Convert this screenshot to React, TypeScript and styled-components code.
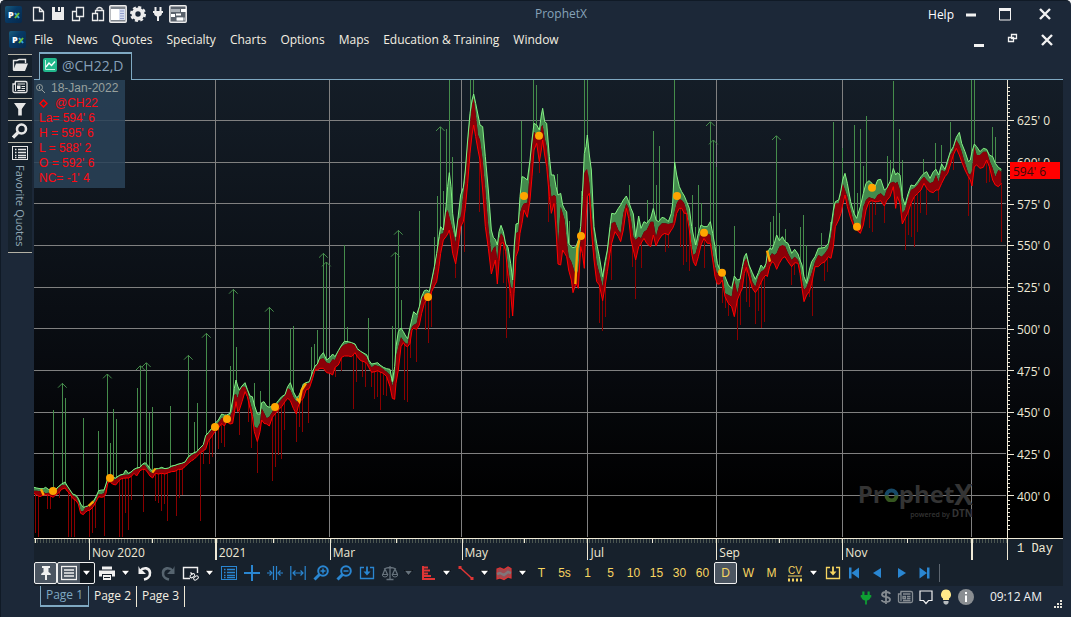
import React from "react";
import styled, { createGlobalStyle, css } from "styled-components";

const color = {
  frame: "#1c2838",
  panel: "#17212c",
  cream: "#efe9d6",
  steel: "#7fa9c2",
  blue: "#2a86d1",
  yellow: "#f7d560",
  red: "#e03535",
  grid: "#808080",
};

const GlobalStyle = createGlobalStyle`
  * { box-sizing: border-box; }
  html, body { margin: 0; padding: 0; background: #f4f6f8; }
  body { font-family: "Open Sans", "Noto Sans", sans-serif; font-size: 12px; color: #f2f2f2; }
  button { font: inherit; color: inherit; background: none; border: 0; padding: 0; margin: 0; }
  svg { display: block; flex: none; }
`;

const Window = styled.div`
  display: flex;
  flex-direction: column;
  min-height: 100vh;
  background: ${color.frame};
  border-radius: 5px 5px 0 0;
  border-left: 1px solid #101a26;
  border-top: 1px solid #101a26;
  overflow: hidden;
`;

const TitleBar = styled.header`
  display: grid;
  grid-template-columns: 1fr auto 1fr;
  align-items: center;
  height: 26px;
  padding: 0 18px 0 4px;
`;

const AppTitle = styled.h1`
  margin: 0;
  padding-left: 64px;
  font-size: 12px;
  font-weight: 400;
  line-height: 16px;
  color: #86a3b8;
`;

const QuickTools = styled.div`
  display: flex;
  align-items: center;
  height: 22px;
`;

const QuickGroup = styled.div`
  display: flex;
  margin-left: 6px;
`;

const QuickButton = styled.button`
  width: 20px;
  height: 20px;
  display: grid;
  place-items: center;
  color: #ececec;
`;

const Controls = styled.div`
  display: flex;
  align-items: center;
  justify-content: flex-end;
`;

const HelpLink = styled.a`
  color: #fff;
  text-decoration: none;
  margin-right: 9px;
`;

const ControlButton = styled.button<{ $gap?: number }>`
  width: 16px;
  height: 16px;
  display: grid;
  place-items: center;
  margin-left: ${(p) => p.$gap ?? 0}px;
`;

const MenuBar = styled.nav`
  display: flex;
  align-items: center;
  height: 25px;
  padding: 0 16px 0 8px;
`;

const MenuList = styled.div`
  display: flex;
  flex: 1;
  gap: 14px;
  padding-left: 8px;
`;

const MenuItem = styled.button`
  color: #f4efe2;
  line-height: 18px;
  white-space: nowrap;
`;

const Body = styled.div`
  display: flex;
  flex: 1;
  padding: 0 8px 0 7px;
`;

const SideBar = styled.aside`
  width: 24px;
  margin-right: 2px;
  padding-top: 2px;
`;

const SideButton = styled.button<{ $tall?: boolean }>`
  display: flex;
  flex-direction: column;
  align-items: center;
  gap: 4px;
  width: 24px;
  height: ${(p) => (p.$tall ? 111 : 22)}px;
  padding-top: 2px;
  border-top: 1px solid #b3b1a5;
  background: #15202b;
  color: #e6e6e6;
  ${(p) =>
    p.$tall &&
    css`
      border-bottom: 1px solid #b3b1a5;
    `}
`;

const VerticalText = styled.span`
  writing-mode: vertical-rl;
  font-size: 11px;
  line-height: 16px;
  color: #93a9b8;
  white-space: nowrap;
`;

const Main = styled.main`
  display: flex;
  flex-direction: column;
  flex: 1;
  min-width: 0;
`;

const TabRow = styled.div`
  display: flex;
  height: 28px;
  padding-left: 5px;
  border-bottom: 1px solid ${color.steel};
`;

const ChartTab = styled.button`
  display: flex;
  align-items: center;
  gap: 5px;
  height: 28px;
  width: 93px;
  padding: 0 0 4px 3px;
  border: 1px solid ${color.steel};
  border-top-width: 2px;
  border-bottom: 0;
  background: #16212c;
  color: #86a0b8;
  font-size: 14px;
  white-space: nowrap;
`;

const ChartRow = styled.div`
  display: flex;
  flex: 1;
`;

const Plot = styled.section`
  position: relative;
  flex: 1;
  display: flex;
  min-height: 300px;
  background: linear-gradient(#141d27, #080b10 60%, #000 92%);
`;

const PlotSvg = styled.svg`
  flex: 1;
  width: 100%;
  height: 100%;
  min-width: 0;
`;

const PriceAxis = styled.div`
  position: relative;
  display: flex;
  width: 56px;
  background: linear-gradient(#141d27, #080b10 60%, #000 92%);
`;

const PriceLabels = styled.div`
  display: flex;
  flex-direction: column;
  flex: 1;
  padding: 20px 0 21px 2px;
`;

const PriceLabel = styled.div`
  flex: 1;
  display: flex;
  align-items: center;
  color: ${color.cream};
  white-space: nowrap;
`;

const LastPrice = styled.div`
  position: absolute;
  top: 18%;
  left: 3px;
  width: 50px;
  height: 17px;
  padding-left: 3px;
  line-height: 19px;
  background: #ff0000;
  color: #3a0c0c;
`;

const Legend = styled.div`
  position: absolute;
  left: 0;
  top: 0;
  width: 91px;
  height: 108px;
  padding: 1px 0 0 5px;
  background: rgba(42, 66, 88, 0.86);
  font-family: "Liberation Sans", Arial, sans-serif;
  font-size: 12px;
  line-height: 15px;
  color: #ff0a12;
  white-space: nowrap;
`;

const LegendDate = styled.div`
  display: flex;
  align-items: center;
  gap: 5px;
  margin-left: -4px;
  color: #98a09d;
`;

const LegendSymbol = styled.div`
  display: flex;
  align-items: center;
  gap: 7px;
`;

const Brand = styled.div`
  position: absolute;
  right: 34px;
  bottom: 18px;
  display: flex;
  flex-direction: column;
  align-items: flex-end;
  color: #343434;
  font-weight: 700;
`;

const BrandName = styled.div`
  display: flex;
  align-items: center;
  font-size: 24px;
  line-height: 28px;
`;

const BrandX = styled.span`
  font-size: 28px;
`;

const BrandNote = styled.div`
  font-size: 7px;
  line-height: 10px;
  font-weight: 600;
`;

const BrandMark = styled.b`
  font-size: 10px;
  font-weight: 700;
`;

const TimeAxis = styled.div`
  display: flex;
  height: 22px;
  border-top: 1px solid ${color.cream};
  background: ${color.panel};
`;

const Months = styled.div`
  flex: 1;
  display: grid;
  grid-template-columns: 55fr 126fr 115fr 132fr 126fr 129fr 126fr 129fr 36fr;
  background: repeating-linear-gradient(90deg, #4a5550 0 1px, transparent 1px 3px) 0 0 / 100% 4px no-repeat;
`;

const Month = styled.div<{ $first?: boolean; $year?: boolean; $last?: boolean }>`
  min-width: 0;
  padding-left: 2px;
  line-height: 28px;
  height: 21px;
  white-space: nowrap;
  color: ${color.cream};
  border-left: ${(p) => (p.$first ? 0 : p.$year ? 2 : 1)}px solid ${color.cream};
  ${(p) =>
    !p.$last &&
    css`
      background: linear-gradient(${color.cream}, ${color.cream}) ${p.$first ? "1px" : "50%"} 0 / 1px 4px no-repeat;
    `}
`;

const Period = styled.div`
  width: 56px;
  border-left: 1px solid ${color.cream};
  padding-left: 9px;
  font-family: "Liberation Mono", "Courier New", monospace;
  font-size: 12px;
  line-height: 21px;
  color: ${color.cream};
`;

const ToolBar = styled.div`
  display: flex;
  align-items: center;
  height: 26px;
  background: ${color.panel};
`;

type ToolProps = { $tone?: string; $caret?: boolean; $active?: boolean; $wide?: boolean };
const Tool = styled.button<ToolProps>`
  flex: none;
  display: flex;
  align-items: center;
  justify-content: center;
  gap: 5px;
  width: ${(p) => (p.$wide ? 38 : p.$caret ? 15 : 23)}px;
  height: 22px;
  color: ${(p) => p.$tone ?? "#f0f0f0"};
  font-family: "Liberation Sans", Arial, sans-serif;
  font-size: 12px;
  ${(p) =>
    p.$active &&
    css`
      border: 1px solid #f0f0f0;
      border-radius: 2px;
      background: ${p.$wide ? "linear-gradient(90deg, #4b5561 60%, #101820 60%)" : "#4b5561"};
    `}
`;

const ToolDivider = styled.span`
  width: 1px;
  height: 18px;
  margin-left: 3px;
  background: #5d6670;
`;

const StatusBar = styled.footer`
  display: flex;
  height: 31px;
  padding-left: 6px;
  justify-content: space-between;
`;

const Pages = styled.div`
  display: flex;
  height: 21px;
`;

const PageTab = styled.button<{ $current?: boolean }>`
  width: ${(p) => (p.$current ? 49 : 48)}px;
  height: 21px;
  line-height: 18px;
  padding-bottom: 2px;
  white-space: nowrap;
  color: ${(p) => (p.$current ? color.steel : "#f4efe2")};
  border-right: 1px solid ${color.cream};
  ${(p) =>
    p.$current &&
    css`
      border: 1px solid ${color.steel};
      border-top: 0;
      border-bottom-width: 2px;
    `}
`;

const StatusIcons = styled.div`
  display: flex;
  align-items: center;
  height: 22px;
`;

const StatusButton = styled.button`
  width: 20px;
  display: grid;
  place-items: center;
`;

const Clock = styled.time`
  margin: 0 12px 0 14px;
  line-height: 16px;
  white-space: nowrap;
`;

const Grip = styled.svg`
  align-self: flex-end;
  margin-right: 1px;
`;

/* ---------- icons ---------- */

const PxLogo = () => (
  <svg width="17" height="17" viewBox="0 0 17 17">
    <defs>
      <linearGradient id="px" x1="0" y1="0" x2="1" y2="1">
        <stop offset="0" stopColor="#1a5f80" />
        <stop offset="0.4" stopColor="#073a66" />
        <stop offset="1" stopColor="#06284c" />
      </linearGradient>
    </defs>
    <rect width="17" height="17" rx="2" fill="url(#px)" />
    <text x="3" y="12" fontFamily="Open Sans" fontWeight="800" fontSize="9" fill="#fff">P</text>
    <path d="M10 7 L14 12" stroke="#35a8e0" strokeWidth="2" />
    <path d="M14 7 L10 12" stroke="#6cbf3a" strokeWidth="2" />
  </svg>
);

type Draw = { children: React.ReactNode; w?: number; h?: number };
const Icon = ({ children, w = 16, h = 16 }: Draw) => (
  <svg width={w} height={h} viewBox={`0 0 ${w} ${h}`} fill="none" stroke="currentColor" strokeWidth="1">
    {children}
  </svg>
);

const Gear = () => (
  <Icon>
    <circle cx="8" cy="8" r="4.6" strokeWidth="3.8" />
    <circle cx="8" cy="8" r="6.8" strokeWidth="2.4" strokeDasharray="3 2.34" />
  </Icon>
);
const Plug = () => (
  <Icon>
    <path d="M5.5 1V5M10.5 1V5" strokeWidth="2" />
    <path d="M3 5h10v2h-1c0 2-1 3-3 3.5V15H7v-4.5C5 10 4 9 4 7H3z" fill="currentColor" stroke="none" />
  </Icon>
);
const Caret = ({ dim }: { dim?: boolean }) => (
  <svg width="9" height="6" viewBox="0 0 9 6">
    <path d="M0 0h9L4.5 5.5z" fill="#05080c" />
    <path d="M1 0.8h7L4.5 5z" fill={dim ? "#66727c" : "#fff"} />
  </svg>
);
const Lines = () => (
  <Icon>
    <rect x="0.5" y="1.5" width="15" height="13" />
    <path d="M3 4.5h1.5M6 4.500h8M3 7.500h1.5M6 7.500h8M3 10.500h1.5M6 10.500h8M3 12.700h1.5M6 12.700h8" strokeWidth="1.3" />
  </Icon>
);
const Lens = ({ plus }: { plus?: boolean }) => (
  <Icon>
    <circle cx="10" cy="6" r="4.8" strokeWidth="2" />
    <path d="M6.5 9.5L1.5 14.5" strokeWidth="3" />
    <path d={plus ? "M7.5 6h5M10 3.5v5" : "M7.5 6h5"} strokeWidth="1.5" />
  </Icon>
);
const Download = () => (
  <Icon>
    <path d="M5 2.5H1.5v11h13v-11H11" strokeWidth="1.3" />
    <path d="M8 1.5v6" strokeWidth="1.8" />
    <path d="M4.5 6.5h7L8 10.5z" fill="currentColor" stroke="none" />
  </Icon>
);
const NewsIcon = () => (
  <Icon>
    <path d="M3.5 2.5h10q1.5 0 1.5 1.5v8q0 1.5-1.5 1.5h-11Q1 13.5 1 12V5h2z" strokeWidth="1.3" />
    <path d="M3.5 3v9" />
    <path d="M5.5 5h7.5M9.5 7.5H13M9.5 9.5H13M5.5 11.5H13" strokeWidth="1.2" />
    <rect x="5.5" y="7" width="2.5" height="2.5" fill="currentColor" />
  </Icon>
);

/* ---------- chart data ---------- */

/* The chart grid uses three units per bar pixel; each block starts at its own origin. */
const place = (ox: number, oy: number, rows: number[][]) =>
  rows.map(([x, ...ys]) => [x + ox, ...ys.map((y) => y + oy)]);

const bands = [
  ...place(90, 840, [
    [12,622,632,640],[20,624,632,645],[30,626,634,650],[40,626,636,645],[47,622,640,645],[55,628,638,645],
    [62,630,640,648],[69,628,640,652],[77,628,636,645],[85,620,624,640],[95,612,616,628],[105,606,614,624],
    [112,618,622,634],[120,630,634,642],[128,642,646,655],[138,646,652,662],[145,655,665,672],[152,672,694,700],
    [160,682,694,704],[166,680,682,697],[173,678,680,692],[180,672,676,690],[190,664,672,680],[198,650,660,665],
    [206,632,642,650],[215,630,642,652],[222,630,640,650],[228,612,620,640],[233,596,602,610],[240,588,596,605],
    [247,592,600,612],[257,594,598,615],[265,588,592,605],[272,584,588,597],[280,583,586,595],[287,570,584,594],
    [295,580,584,594],[303,576,580,590],[312,568,570,580],[320,564,568,588],[330,562,564,572],[338,552,556,568],
    [345,548,556,568],[352,554,566,576],[360,566,576,588],[368,574,580,594],[376,566,570,580],[385,566,568,582],
    [395,562,568,580],[405,566,568,582],[415,564,566,578],[425,558,562,575],[435,556,558,574],[445,552,555,568],
    [455,550,552,568],[465,546,548,560],[475,530,534,550],[485,522,526,542],[492,518,522,538],[500,515,518,530],
    [510,504,506,520],[520,494,498,512],[527,466,470,508],[535,458,462,482],[545,445,450,470],[555,430,442,455],
    [565,420,428,445],[575,402,415,430],[583,405,412,438],[590,405,412,425],[600,400,410,432],[608,360,390,430],
    [613,325,345,400],[618,300,342,365],[623,318,355,395],[628,330,335,390],[636,318,320,365],[645,308,320,335],
    [652,328,335,350],[660,348,365,385],[667,350,390,410],[673,375,440,455],[682,402,445,485],[690,402,430,455],
    [695,368,385,420],[702,365,398,430],[710,378,415,432],[718,382,410,438],[727,378,395,412],[735,375,385,402],
    [745,362,370,390],[755,350,358,380],[765,344,346,365],[773,320,324,355],[781,308,330,362],[790,335,352,385],
    [799,352,365,402],[805,350,362,378],[812,335,345,362],[820,312,318,355],[828,308,312,330],[838,305,308,325],
    [848,275,282,295],[855,258,262,270],[862,252,255,270],[870,230,238,265],[880,218,235,265],[890,240,248,278],
    [900,232,250,280],[908,222,238,285],[915,230,240,262],[925,212,215,255],[935,195,200,232],
  ]),
  ...place(1020, 240, [
    [13,784,794,828],[25,785,790,828],[35,788,790,830],[45,792,796,818],[52,806,810,830],[62,814,816,842],
    [72,820,824,845],[80,824,832,850],[86,840,850,862],[95,852,862,877],[105,850,855,875],[113,848,858,872],
    [120,855,860,876],[130,862,868,880],[140,866,875,890],[150,868,885,920],[157,905,918,955],[164,860,895,958],
    [168,800,830,910],[175,755,800,870],[183,744,772,800],[190,755,782,788],[197,768,790,798],[203,776,792,800],
    [210,742,755,790],[216,715,740,750],[221,695,735,745],[230,704,730,748],[238,680,690,735],[245,650,655,700],
    [253,632,645,670],[260,630,640,660],[268,635,645,660],[275,600,610,635],[283,560,575,618],[290,520,530,605],
    [297,470,490,560],[302,440,462,520],[310,450,460,480],[318,380,400,470],[323,320,390,462],[328,278,410,450],
    [333,320,430,480],[338,400,450,520],[347,470,488,552],[355,405,420,500],[362,345,410,440],[370,322,345,425],
    [376,270,300,385],[383,180,200,310],[390,100,130,220],[396,60,75,165],[401,42,55,135],[407,70,100,170],
    [414,105,165,210],[420,135,180,240],[428,140,240,330],[436,230,330,440],[445,330,440,505],[454,450,520,582],
    [460,472,505,560],[466,478,498,540],[472,495,540,612],[477,455,480,545],[483,436,460,490],[490,455,470,488],
    [497,492,500,515],[504,502,560,590],[512,550,620,640],[518,600,625,708],[522,505,570,640],[528,432,460,530],
    [535,430,455,510],[540,350,400,460],[546,290,380,430],[552,292,370,390],[562,300,368,412],[570,240,270,360],
    [576,180,200,290],[582,130,155,210],[590,135,165,190],[598,150,180,245],[604,105,140,210],[608,85,135,180],
    [614,125,175,225],[620,130,200,260],[628,230,300,350],[634,285,350,400],[642,285,345,370],[648,320,350,450],
    [654,345,500,552],[662,340,380,555],[668,375,400,510],[674,388,420,520],[680,395,480,530],[686,490,530,570],
    [694,500,545,600],[699,503,560,638],[708,500,590,610],[715,480,570,625],[722,440,470,500],[727,350,380,520],
    [733,220,280,565],[738,200,270,420],[742,165,268,350],[748,225,310,340],[754,270,390,450],[762,440,480,540],
    [770,490,550,605],[778,530,580,615],[788,590,620,662],[795,545,570,620],[802,510,530,575],[810,440,465,520],
    [815,400,430,490],[825,402,425,455],[835,385,450,470],[842,375,460,485],[850,360,400,450],[859,348,370,385],
    [866,365,385,415],[873,385,420,480],[880,402,470,510],[887,470,480,540],[896,408,470,500],[903,445,475,490],
    [912,425,455,475],[920,430,450,490],[932,415,425,500],[940,385,425,465],[948,420,470,498],[956,425,440,480],
    [966,412,430,465],[975,415,430,460],[985,425,432,465],
  ]),
  ...place(1950, 240, [
    [64,400,430,450],[68,370,430,445],[74,246,395,430],[80,285,370,400],[88,320,358,385],[95,335,360,385],
    [103,348,370,400],[110,365,395,400],[118,385,440,450],[125,440,500,520],[130,465,525,545],[137,495,520,558],
    [145,460,490,530],[153,435,450,495],[162,440,450,475],[172,440,460,490],[181,425,465,490],[188,460,520,540],
    [195,500,560,590],[202,550,580,612],[209,568,580,612],[217,572,580,600],[225,590,640,650],[235,615,645,670],
    [245,625,650,680],[253,588,600,710],[262,600,640,660],[270,598,605,640],[277,560,570,625],[283,530,545,580],
    [289,520,535,562],[297,555,565,590],[307,578,605,625],[316,598,620,638],[325,578,590,625],[333,555,575,608],
    [341,565,570,592],[348,550,560,585],[352,520,530,590],[359,505,530,560],[366,508,520,545],[373,490,525,550],
    [380,465,520,568],[388,482,500,550],[397,470,495,535],[405,485,498,530],[414,490,520,545],[425,520,540,560],
    [434,508,530,548],[444,522,540,550],[450,540,560,580],[456,555,600,625],[462,590,630,665],[470,610,620,645],
    [478,570,600,635],[485,545,580,610],[495,530,545,560],[505,505,525,560],[515,504,530,550],[525,502,520,545],
    [535,490,505,530],[543,440,470,535],[550,390,420,500],[556,365,370,440],[566,360,370,420],[573,330,345,400],
    [578,300,310,375],[585,280,330,345],[592,310,350,380],[602,365,390,415],[612,400,430,440],[620,415,440,450],
    [631,380,445,460],[640,340,380,435],[648,310,360,390],[657,302,352,365],[666,310,355,362],[675,320,358,365],
    [683,300,345,365],[692,298,340,362],[703,330,350,378],[710,325,330,362],[720,305,310,350],[730,265,305,320],
    [737,285,310,385],[742,278,305,350],[750,285,330,370],[757,350,400,432],[765,375,390,415],[773,345,360,400],
    [783,315,330,370],[793,318,325,350],[803,305,315,340],[813,290,300,330],[822,280,290,310],[830,275,300,325],
    [840,295,310,335],[850,275,305,338],[858,268,285,330],[866,285,305,330],[875,252,270,310],[885,268,275,290],
    [893,240,255,280],[901,215,225,255],[910,200,210,225],[919,172,180,205],[928,157,195,225],[935,190,215,245],
    [945,215,250,270],[955,245,280,290],[961,240,285,300],[966,215,270,318],[973,192,200,260],[980,200,225,255],
    [990,215,225,265],[1000,205,215,262],[1010,208,215,240],[1018,225,240,260],[1028,230,265,300],[1036,250,290,315],
    [1045,262,270,320],[1054,268,275,310],
  ]),
];

const highs = [
  ...place(90, 840, [
    [70,390],[107,354],[160,414],[205,454],[241,488],[250,388],[259,416],[322,324],[358,398],[367,380],[421,377],
    [493,426],[502,370],[601,258],[619,200],[673,308],[691,332],[781,146],[790,138],[844,200],[853,192],[862,150],
    [943,-105],[952,142],
  ]),
  ...place(1020, 240, [
    [85,714],[157,738],[184,660],[238,393],[283,472],[292,348],[310,333],[319,147],[328,0],[337,230],[391,0],
    [401,0],[544,123],[580,0],[589,15],[652,282],[688,424],[724,333],[733,0],[742,0],[868,315],[922,360],[940,153],
    [949,315],[958,198],
  ]),
  ...place(1950, 240, [
    [19,315],[73,0],[127,345],[136,440],[145,315],[154,370],[199,260],[208,495],[253,438],[361,426],[370,407],
    [388,400],[406,447],[451,440],[460,405],[469,495],[514,460],[541,425],[550,126],[577,205],[613,135],[622,340],
    [631,147],[640,258],[649,108],[712,228],[721,240],[730,3],[748,147],[757,240],[820,237],[856,188],[874,195],
    [901,126],[964,0],[973,0],[1027,141],[1036,172],
  ]),
];

const arrows = [
  ...place(90, 840, [[97,310],[232,282],[331,257],[349,248],[475,226],[529,160],[610,28],[718,82],[880,-80],[889,-54]]),
  ...place(1020, 240, [[166,517],[175,451],[301,140]]),
  ...place(1950, 240, [[181,125],[190,180],[379,167]]),
];

const lows = [
  ...place(90, 840, [
    [16,758],[25,770],[52,688],[61,688],[88,655],[115,770],[124,770],[133,770],[178,770],[187,758],[196,744],
    [223,768],[268,770],[277,770],[286,700],[295,750],[304,660],[340,695],[376,662],[385,668],[394,692],[403,672],
    [412,722],[439,708],[448,655],[457,645],[511,722],[520,552],[538,552],[547,532],[565,508],[574,488],[583,502],
    [628,465],[655,425],[664,503],[682,580],[727,603],[736,562],[745,525],[754,537],[763,450],[799,485],[808,440],
    [817,455],[835,430],[916,292],[934,272],
  ]),
  ...place(1020, 240, [
    [4,870],[40,988],[49,905],[67,890],[76,922],[94,922],[103,958],[112,952],[121,990],[130,945],[139,948],
    [193,960],[202,965],[211,835],[229,845],[256,750],[265,790],[274,742],[346,593],[373,515],[418,395],[499,775],
    [508,715],[490,608],[598,280],[625,425],[778,730],[787,752],[796,712],[814,600],[877,560],[886,656],[904,563],
  ]),
  ...place(1950, 240, [
    [46,515],[55,505],[91,500],[100,555],[109,545],[118,572],[163,563],[217,668],[226,685],[235,708],[262,780],
    [271,735],[289,665],[298,680],[316,732],[325,692],[334,743],[343,725],[424,615],[433,585],[478,650],[487,708],
    [523,603],[532,575],[658,443],[667,455],[676,405],[703,430],[766,510],[775,465],[784,470],[793,502],[802,455],
    [811,400],[829,405],[865,362],[910,270],[955,407],[1009,308],[1018,305],[1054,486],
  ]),
];

const dots = [
  ...place(90, 840, [[69,633],[240,594],[555,441],[591,417],[735,381]]),
  ...place(1020, 240, [[264,651],[552,348],[597,167],[723,468]]),
  ...place(1950, 240, [[81,348],[162,458],[216,578],[621,440],[666,323]]),
];

const crossings = [
  place(90, 840, [[33,628],[41,645]]),
  place(90, 840, [[176,678],[190,664]]),
  place(90, 840, [[367,578],[376,566]]),
  place(90, 840, [[800,355],[808,365],[815,330],[828,310]]),
  place(1020, 240, [[706,612],[712,505],[718,480]]),
  place(1950, 240, [[351,512],[360,545]]),
];

const bandAt = (x: number, key: number) => {
  const i = bands.findIndex((b) => b[0] >= x);
  if (i <= 0) return bands[i === 0 ? 0 : bands.length - 1][key];
  const a = bands[i - 1];
  const b = bands[i];
  return a[key] + ((b[key] - a[key]) * (x - a[0])) / (b[0] - a[0]);
};

const line = (key: number) => bands.map((b) => `${b[0]},${b[key]}`).join(" ");
const area = (top: number, bottom: number) =>
  line(top) + " " + [...bands].reverse().map((b) => `${b[0]},${b[bottom]}`).join(" ");

const levels = [0, 1, 2, 3, 4, 5, 6, 7, 8, 9].map((i) => 361.5 + i * 125);
const monthLines = [646.5, 988.5, 1384.5, 1762.5, 2149.5, 2527.5, 2914.5];

const Chart = () => (
  <PlotSvg viewBox="102 240 2919 1374" preserveAspectRatio="none" role="img" aria-label="@CH22 daily chart">
    <g stroke={color.grid} strokeWidth="3" shapeRendering="crispEdges">
      {levels.map((y) => <path key={y} d={`M102 ${y}H3018`} />)}
      {monthLines.map((x) => <path key={x} d={`M${x} 240V1611`} />)}
    </g>
    <g stroke="#458c4b" strokeWidth="3" shapeRendering="crispEdges">
      {highs.map(([x, y]) => <path key={x} d={`M${x} ${y}V${bandAt(x, 1)}`} />)}
      {arrows.map(([x, y]) => <path key={x} d={`M${x} ${y}V${bandAt(x, 1)}`} />)}
    </g>
    <g stroke="#8a0000" strokeWidth="3" shapeRendering="crispEdges">
      {lows.map(([x, y]) => <path key={x} d={`M${x} ${bandAt(x, 3)}V${y}`} />)}
    </g>
    <g stroke="#458c4b" strokeWidth="3" fill="none">
      {arrows.map(([x, y]) => <path key={x} d={`M${x - 13} ${y + 13}L${x} ${y}L${x + 13} ${y + 13}`} />)}
    </g>
    <polygon points={area(1, 2)} fill="#438a4d" />
    <polygon points={area(2, 3)} fill="#8b0008" />
    <polyline points={line(1)} fill="none" stroke="#84f284" strokeWidth="3" />
    <polyline points={line(3)} fill="none" stroke="#ff0000" strokeWidth="3" />
    {crossings.map((c, i) => (
      <polyline key={i} points={c.map((p) => p.join(",")).join(" ")} fill="none" stroke="#ffa500" strokeWidth="7" />
    ))}
    {dots.map(([x, y]) => <circle key={x} cx={x} cy={y} r="12" fill="#ffa500" />)}
  </PlotSvg>
);

const AxisTicks = () => (
  <svg width="8" height="100%" viewBox="0 0 8 458" preserveAspectRatio="none" stroke={color.cream} shapeRendering="crispEdges">
    <path d="M0.5 0V458" />
    {Array.from({ length: 107 }, (_, i) => (
      <path key={i} d={`M0 ${7.5 + i * 4.1667}H${i % 10 === 8 ? 7 : 3}`} />
    ))}
  </svg>
);

const prices = ["625' 0", "600' 0", "575' 0", "550' 0", "525' 0", "500' 0", "475' 0", "450' 0", "425' 0", "400' 0"];
const menus = ["File", "News", "Quotes", "Specialty", "Charts", "Options", "Maps", "Education & Training", "Window"];
const months = ["", "Nov 2020", "2021", "Mar", "May", "Jul", "Sep", "Nov", ""];
const intervals = ["T", "5s", "1", "5", "10", "15", "30", "60", "D", "W", "M"];

const DropTool = ({ dim, label }: { dim?: boolean; label: string }) => (
  <Tool $caret aria-label={label}><Caret dim={dim} /></Tool>
);

export default function App() {
  return (
    <>
      <GlobalStyle />
      <Window>
        <TitleBar>
          <QuickTools>
            <PxLogo />
            <QuickGroup>
              <QuickButton aria-label="New">
                <Icon><path d="M3.5 1.5h6l4 4v9h-10zM9.5 1.5v4h4" strokeWidth="1.3" /></Icon>
              </QuickButton>
              <QuickButton aria-label="Save">
                <Icon>
                  <path d="M2 1h12v13H2z" fill="currentColor" stroke="none" />
                  <path d="M5 1h6v5H5z" fill={color.frame} stroke="none" />
                  <path d="M8 1h2v4H8z" fill="currentColor" stroke="none" />
                </Icon>
              </QuickButton>
              <QuickButton aria-label="Copy">
                <Icon><path d="M6.5 1.5h7v9h-7zM6 5.5H2.5v9h7V11" strokeWidth="1.3" /></Icon>
              </QuickButton>
              <QuickButton aria-label="Paste">
                <Icon><path d="M5.5 7V4.500h8v10h-5M7 4V2.500q2.500-2 5 0V4M2.500 7.500h5v7h-5z" strokeWidth="1.3" /></Icon>
              </QuickButton>
              <QuickButton aria-label="Layout">
                <Icon w={18} h={18}>
                  <rect x="0.8" y="0.8" width="16.4" height="16.4" rx="1" fill="#7c838b" strokeWidth="1.5" />
                  <rect x="2" y="4" width="8" height="11" fill="#fff" stroke="none" />
                  <rect x="10" y="4" width="6" height="11" fill="#d7def0" stroke="none" />
                  <path d="M11.5 6h3M11.5 8.5h3M11.5 11h3M11.5 13.5h3" stroke="#4c5fa8" strokeDasharray="1 1" />
                </Icon>
              </QuickButton>
              <QuickButton aria-label="Settings"><Gear /></QuickButton>
              <QuickButton aria-label="Connect"><Plug /></QuickButton>
              <QuickButton aria-label="Arrange">
                <Icon w={18} h={18}>
                  <rect x="0.8" y="0.8" width="16.4" height="16.4" rx="1" fill="#59616b" strokeWidth="1.5" />
                  <path d="M2 5.5h9M7 14h9" stroke="#a9afb5" strokeWidth="3" />
                  <path d="M12 5.5h5M2 10.5h4M8 14h6" stroke="#fff" strokeWidth="3" />
                  <path d="M7 9.500h5" stroke="#fff" strokeWidth="2" />
                </Icon>
              </QuickButton>
            </QuickGroup>
          </QuickTools>
          <AppTitle>ProphetX</AppTitle>
          <Controls>
            <HelpLink href="#help">Help</HelpLink>
            <ControlButton aria-label="Minimize"><Icon><path d="M3 9h10" strokeWidth="3" /></Icon></ControlButton>
            <ControlButton $gap={18} aria-label="Maximize">
              <Icon><path d="M2.5 3v11h11V3" /><path d="M2 3.500h12" strokeWidth="3" /></Icon>
            </ControlButton>
            <ControlButton $gap={24} aria-label="Close"><Icon><path d="M3 3L13 13M13 3L3 13" strokeWidth="2.4" /></Icon></ControlButton>
          </Controls>
        </TitleBar>

        <MenuBar>
          <PxLogo />
          <MenuList>
            {menus.map((m) => <MenuItem key={m}>{m}</MenuItem>)}
          </MenuList>
          <ControlButton aria-label="Minimize chart"><Icon><path d="M3 13.5h10" strokeWidth="3" /></Icon></ControlButton>
          <ControlButton $gap={18} aria-label="Restore chart">
            <Icon><path d="M6.5 2.5h5v4h-5zM3.5 5.500h5v4h-5z" strokeWidth="1.3" /></Icon>
          </ControlButton>
          <ControlButton $gap={18} aria-label="Close chart"><Icon><path d="M3 3L13 13M13 3L3 13" strokeWidth="2.4" /></Icon></ControlButton>
        </MenuBar>

        <Body>
          <SideBar>
            <SideButton aria-label="Open">
              <Icon>
                <path d="M1.5 13V3.500H5L7 2.500H13.500V6" strokeWidth="1.4" />
                <path d="M4 6.5H16L13 14H1z" fill="currentColor" stroke="none" />
              </Icon>
            </SideButton>
            <SideButton aria-label="News"><NewsIcon /></SideButton>
            <SideButton aria-label="Filter">
              <Icon><path d="M2 2h12L9.8 8v6.500H6.200V8z" fill="currentColor" stroke="none" /></Icon>
            </SideButton>
            <SideButton aria-label="Search">
              <Icon><circle cx="9.5" cy="6" r="4.5" strokeWidth="2.6" /><path d="M6 9.500L1 14.500" strokeWidth="3.2" /></Icon>
            </SideButton>
            <SideButton $tall><Lines /><VerticalText>Favorite Quotes</VerticalText></SideButton>
          </SideBar>

          <Main>
            <TabRow>
              <ChartTab>
                <svg width="14" height="14" viewBox="0 0 14 14" fill="none">
                  <rect width="14" height="14" rx="2" fill="#22b88c" />
                  <path d="M2.5 2v9.500H12" stroke="#c9f3e4" />
                  <path d="M3 9L6 5L8.500 7.500L12 3.500" stroke="#fff" strokeWidth="1.4" />
                </svg>
                @CH22,D
              </ChartTab>
            </TabRow>

            <ChartRow>
              <Plot>
                <Brand>
                  <BrandName>
                    Pr
                    <svg width="15" height="15" viewBox="0 0 15 15" fill="none" strokeWidth="4">
                      <path d="M2.5 8.500a5 5 0 0 1 10 0" stroke="#174a68" />
                      <path d="M2.5 8.500a5 5 0 0 0 10 0" stroke="#35561f" />
                    </svg>
                    phet<BrandX>X</BrandX>
                  </BrandName>
                  <BrandNote>powered by <BrandMark>DTN</BrandMark></BrandNote>
                </Brand>
                <Chart />
                <Legend>
                  <LegendDate>
                    <svg width="11" height="11" viewBox="0 0 11 11" fill="none" stroke="#98a09d">
                      <circle cx="4.5" cy="4.5" r="3" /><path d="M6.5 6.5L10 10M4.5 3v3" />
                    </svg>
                    18-Jan-2022
                  </LegendDate>
                  <LegendSymbol>
                    <svg width="9" height="9" viewBox="0 0 9 9" fill="none" stroke="#ff0000" strokeWidth="1.5">
                      <path d="M4.5 1L8 4.500L4.500 8L1 4.500z" />
                    </svg>
                    @CH22
                  </LegendSymbol>
                  <div>La= 594' 6</div>
                  <div>H = 595' 6</div>
                  <div>L = 588' 2</div>
                  <div>O = 592' 6</div>
                  <div>NC= -1' 4</div>
                </Legend>
              </Plot>
              <PriceAxis>
                <AxisTicks />
                <PriceLabels>
                  {prices.map((p) => <PriceLabel key={p}>{p}</PriceLabel>)}
                </PriceLabels>
                <LastPrice>594' 6</LastPrice>
              </PriceAxis>
            </ChartRow>

            <TimeAxis>
              <Months>
                {months.map((m, i) => (
                  <Month key={i} $first={i === 0} $year={i === 2 || i === 8} $last={i === 8}>{m}</Month>
                ))}
              </Months>
              <Period>1 Day</Period>
            </TimeAxis>

            <ToolBar>
              <Tool $active aria-label="Pin">
                <Icon><path d="M4 1h8v2h-1.500V7Q13 8 13 10H9V15H7V10H3Q3 8 5.500 7V3H4z" fill="currentColor" stroke="none" /></Icon>
              </Tool>
              <Tool $active $wide aria-label="Window list">
                <Icon>
                  <rect x="0.5" y="1.5" width="15" height="13" strokeWidth="1.3" />
                  <path d="M3 5h10M3 8h10M3 11h10" strokeWidth="1.3" />
                </Icon>
                <Caret />
              </Tool>
              <Tool aria-label="Print">
                <Icon>
                  <path d="M3 1.5h10v3H3zM0 5.500h16v6h-3V9H3v2.500H0zM4 10h8v5H4z" fill="currentColor" stroke="none" />
                  <path d="M5 12.5h6" stroke={color.panel} />
                </Icon>
              </Tool>
              <DropTool label="Print options" />
              <Tool aria-label="Undo">
                <Icon><path d="M3 6C7 1.500 12.500 3 13 7.500S9.500 14 7 14.500" strokeWidth="2.6" /><path d="M1.5 1v8H9L6 6L3.500 5z" fill="currentColor" stroke="none" /></Icon>
              </Tool>
              <Tool aria-label="Redo" $tone="#56646f">
                <Icon><path d="M13 6C9 1.500 3.500 3 3 7.500S6.500 14 9 14.500" strokeWidth="2.6" /><path d="M14.5 1v8H7L10 6L12.500 5z" fill="currentColor" stroke="none" /></Icon>
              </Tool>
              <Tool aria-label="Link window">
                <Icon w={17}>
                  <path d="M8 13.5H1.500v-11h14V8" strokeWidth="1.4" />
                  <rect x="8" y="9.5" width="5" height="3" rx="1.5" transform="rotate(-35 10 11)" />
                  <rect x="11.5" y="11.5" width="5" height="3" rx="1.5" transform="rotate(-35 14 13)" />
                  <path d="M8.5 7.5l2 2" strokeWidth="1.5" />
                </Icon>
              </Tool>
              <DropTool label="Link options" />
              <Tool $tone={color.blue} aria-label="List"><Lines /></Tool>
              <Tool $tone={color.blue} aria-label="Crosshair"><Icon><path d="M0 8h16M8 0v16" strokeWidth="2" /></Icon></Tool>
              <Tool $tone={color.blue} aria-label="Compress bars">
                <Icon><path d="M6.5 1v14M9.5 1v14M0 8h4M16 8h-4" strokeWidth="1.2" /><path d="M2.5 5.500L5 8L2.500 10.500M13.500 5.500L11 8L13.500 10.500" strokeWidth="1.2" /></Icon>
              </Tool>
              <Tool $tone={color.blue} aria-label="Expand bars">
                <Icon><path d="M0.8 1v14M15.2 1v14M3 8h10M5.5 5.500L3 8L5.500 10.500M10.500 5.500L13 8L10.500 10.500" strokeWidth="1.2" /></Icon>
              </Tool>
              <Tool $tone={color.blue} aria-label="Zoom in"><Lens plus /></Tool>
              <Tool $tone={color.blue} aria-label="Zoom out"><Lens /></Tool>
              <Tool $tone={color.blue} aria-label="Save view"><Download /></Tool>
              <Tool $tone="#66727c" aria-label="Compare">
                <Icon><path d="M8 1v13M4.5 14.500h7M2 4q6-3 12 0M3 4L0.800 9.500M3 4l2.500 5.500M13 4l-2.500 5.500M13 4l2.500 5.500" strokeWidth="1.3" /><path d="M0 9.5h6q-.5 2.500-3 2.500T0 9.500zM10 9.500h6q-.5 2.500-3 2.500t-3-2.500z" /></Icon>
              </Tool>
              <DropTool dim label="Compare options" />
              <Tool $tone={color.red} aria-label="Volume profile">
                <Icon><path d="M3 1v14M3 2.500h5M3 5.500h7M3 8.500h5M3 11h8M3 14h12" strokeWidth="2" /></Icon>
              </Tool>
              <DropTool label="Volume options" />
              <Tool $tone={color.red} aria-label="Trend line">
                <Icon><path d="M2 2.5L14 13.500" strokeWidth="1.5" /><path d="M0.5 1h3v3h-3zM12.500 12h3v3h-3z" fill="currentColor" stroke="none" /></Icon>
              </Tool>
              <DropTool label="Line options" />
              <Tool $tone={color.red} aria-label="Study">
                <Icon>
                  <path d="M1 4L4 3L8 4.500L12 2L15 3.500V13L12 12L8 14.500L4 13L1 14z" fill="#a04a50" strokeWidth="1.2" />
                  <path d="M1 9L4 8L8 10L12 7L15 8" stroke="#80767a" strokeWidth="2.5" />
                </Icon>
              </Tool>
              <DropTool label="Study options" />
              {intervals.map((t) => <Tool key={t} $tone={color.yellow} $active={t === "D"}>{t}</Tool>)}
              <Tool $tone={color.yellow} aria-label="Custom volume">
                <Icon w={16} h={17}>
                  <text x="1" y="9" fontFamily="Liberation Sans" fontSize="10" fill="currentColor" stroke="none">CV</text>
                  <path d="M1 11h14" />
                  <path d="M1 15h14" strokeWidth="3" strokeDasharray="2 2" />
                </Icon>
              </Tool>
              <DropTool label="Interval options" />
              <Tool $tone={color.yellow} aria-label="Load interval"><Download /></Tool>
              <Tool $tone={color.blue} aria-label="First">
                <Icon><path d="M1 2.5v11H3.500v-11zM11 2.500v11L3.500 8z" fill="currentColor" stroke="none" /></Icon>
              </Tool>
              <Tool $tone={color.blue} aria-label="Previous"><Icon><path d="M10 3v10L2 8z" fill="currentColor" stroke="none" /></Icon></Tool>
              <Tool $tone={color.blue} aria-label="Next"><Icon><path d="M4 3v10l8-5z" fill="currentColor" stroke="none" /></Icon></Tool>
              <Tool $tone={color.blue} aria-label="Last">
                <Icon><path d="M12.500 2.500v11h-2.500v-11zM2.500 2.500v11L10 8z" fill="currentColor" stroke="none" /></Icon>
              </Tool>
              <ToolDivider />
            </ToolBar>

            <StatusBar>
              <Pages>
                <PageTab $current>Page 1</PageTab>
                <PageTab>Page 2</PageTab>
                <PageTab>Page 3</PageTab>
              </Pages>
              <StatusIcons>
                <StatusButton aria-label="Connected">
                  <svg width="14" height="15" viewBox="0 0 16 16" fill="none">
                    <path d="M5 1V5M11 1V5" stroke="#0e9f33" strokeWidth="2.5" />
                    <path d="M2 5h12v3h-1c0 2-2 3-4 3.500V16H7v-4.500C5 11 3 10 3 8H2z" fill="#0e9f33" />
                  </svg>
                </StatusButton>
                <StatusButton aria-label="Account">
                  <svg width="12" height="16" viewBox="0 0 12 16" fill="none" stroke="#858b91" strokeWidth="1.8">
                    <path d="M10 5Q9.500 3 6 3T2 5.400Q2 7.400 6 7.900T10 10.600Q10 13 6 13T1.800 11M6 1v14" />
                  </svg>
                </StatusButton>
                <StatusButton aria-label="Headlines">
                  <svg width="17" height="16" viewBox="0 0 16 16" fill="none" stroke="#858b91" strokeWidth="1.3">
                    <path d="M3.5 2.5h10q1.5 0 1.5 1.5v8q0 1.5-1.5 1.5h-11Q1 13.5 1 12V5h2zM3.5 3v9M5.5 5H13M9.5 7.5H13M9.5 9.5H13M5.5 11.5H13M5.5 7.5H8v2H5.5z" />
                  </svg>
                </StatusButton>
                <StatusButton aria-label="Messages">
                  <Icon><path d="M2 2h12v9.500H10.500L8 14.500L5.500 11.500H2z" strokeWidth="1.2" /></Icon>
                </StatusButton>
                <StatusButton aria-label="Tips">
                  <svg width="12" height="16" viewBox="0 0 12 16">
                    <path d="M6 0.5a5 5 0 0 1 3 9V11H3V9.500a5 5 0 0 1 3-9z" fill="#ffe98a" />
                    <path d="M3.5 12h5v2L7 15.500H5L3.500 14z" fill="#b9bdc0" />
                  </svg>
                </StatusButton>
                <StatusButton aria-label="Information">
                  <svg width="16" height="16" viewBox="0 0 16 16">
                    <circle cx="8" cy="8" r="8" fill="#8a8e92" />
                    <path d="M7 6.5h2V13H7zM7 3h2v2H7z" fill="#fff" />
                  </svg>
                </StatusButton>
                <Clock>09:12 AM</Clock>
                <Grip width="8" height="8" viewBox="0 0 8 8" fill="#e6e2d8">
                  <path d="M6 0h2v2H6zM3 3h2v2H3zM6 3h2v2H6zM0 6h2v2H0zM3 6h2v2H3zM6 6h2v2H6z" />
                </Grip>
              </StatusIcons>
            </StatusBar>
          </Main>
        </Body>
      </Window>
    </>
  );
}
